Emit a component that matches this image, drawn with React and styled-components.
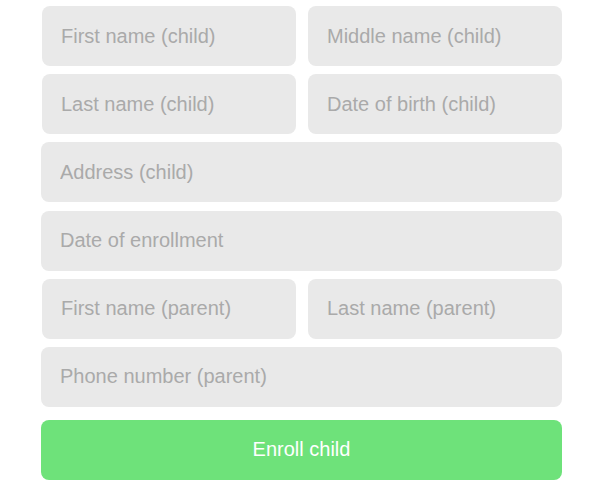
import React from 'react';
import styled, { createGlobalStyle } from 'styled-components';

const GlobalStyle = createGlobalStyle`
    html, body {
        margin: 0;
        padding: 0;
        background: #ffffff;
        font-family: "Liberation Sans", Arial, sans-serif;
    }
`;

const Form = styled.form`
    width: 521px;
    margin: 6px 0 0 41px;
    display: flex;
    flex-direction: column;
    gap: 8.2px;
`;

const Row = styled.div`
    display: grid;
    grid-template-columns: 1fr 1fr;
    gap: 12px;
    padding-left: 1px;
`;

const Field = styled.input`
    box-sizing: border-box;
    width: 100%;
    height: 60px;
    border: none;
    outline: none;
    border-radius: 8px;
    background: #e9e9e9;
    padding: 0 19px;
    font-family: "Liberation Sans", Arial, sans-serif;
    font-size: 20px;
    color: #333;

    &::placeholder {
        color: #aaaaaa;
    }
`;

const Submit = styled.button`
    height: 60px;
    margin-top: 4.8px;
    border: none;
    border-radius: 8px;
    background: #6ee27a;
    color: #ffffff;
    font-family: "Liberation Sans", Arial, sans-serif;
    font-size: 20px;
    cursor: pointer;
`;

export default function App() {
    return (
        <>
            <GlobalStyle />
            <Form onSubmit={e => e.preventDefault()}>
                <Row>
                    <Field placeholder="First name (child)" />
                    <Field placeholder="Middle name (child)" />
                </Row>
                <Row>
                    <Field placeholder="Last name (child)" />
                    <Field placeholder="Date of birth (child)" />
                </Row>
                <Field placeholder="Address (child)" />
                <Field placeholder="Date of enrollment" />
                <Row>
                    <Field placeholder="First name (parent)" />
                    <Field placeholder="Last name (parent)" />
                </Row>
                <Field placeholder="Phone number (parent)" />
                <Submit type="submit">Enroll child</Submit>
            </Form>
        </>
    );
}
